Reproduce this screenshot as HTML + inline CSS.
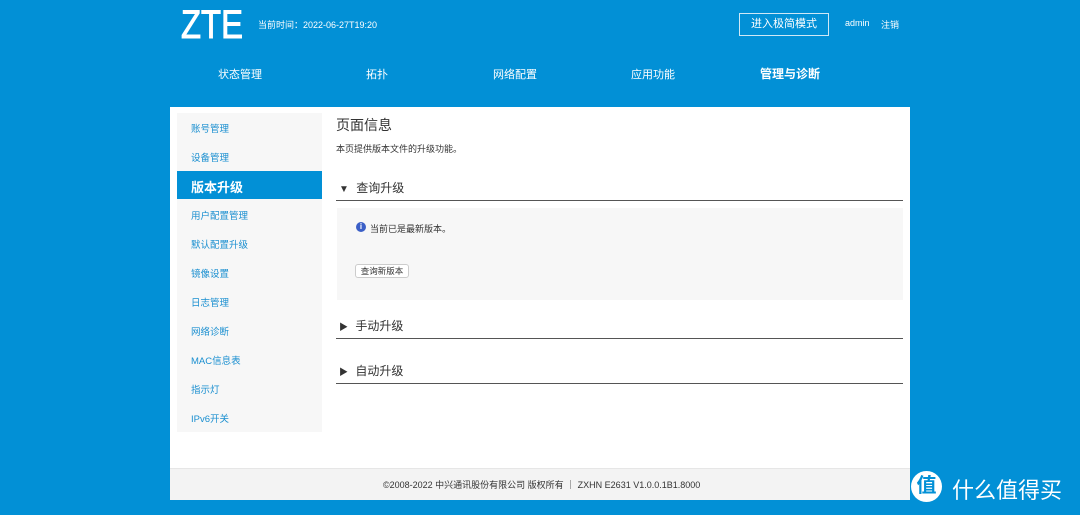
<!DOCTYPE html><html><head><meta charset="utf-8"><style>
body{margin:0;width:1080px;height:515px;background:#0290d6;font-family:"Liberation Sans","Noto Sans CJK SC",sans-serif;position:relative;overflow:hidden}
.a{position:absolute;white-space:nowrap}
.w{color:#fff}
.nav{font-size:11px;color:#fff;top:66px}
.side{position:absolute;left:177px;top:113px;width:145px;height:319px;background:#f7f7f7}
.si{position:absolute;left:14px;font-size:9.5px;color:#1a8fd0}
.sec{position:absolute;left:336px;width:567px;height:1px;background:#555}
.st{position:absolute;left:339px;font-size:12px;color:#333}
</style></head><body>
<div class="a w" style="left:181px;top:3px;font-size:40px;letter-spacing:0px;transform:scaleX(.82);transform-origin:left;-webkit-text-stroke:1px #fff">ZTE</div>
<div class="a w" style="left:258px;top:18px;font-size:9px">当前时间：2022-06-27T19:20</div>
<div class="a w" style="left:739px;top:13px;width:88px;height:21px;border:1px solid #cfe8f6;font-size:11px;text-align:center;line-height:21px">进入极简模式</div>
<div class="a w" style="left:845px;top:18px;font-size:9px">admin</div>
<div class="a w" style="left:881px;top:18px;font-size:9px">注销</div>
<div class="a nav" style="left:218px">状态管理</div>
<div class="a nav" style="left:366px">拓扑</div>
<div class="a nav" style="left:493px">网络配置</div>
<div class="a nav" style="left:631px">应用功能</div>
<div class="a nav" style="left:760px;font-size:12px;font-weight:bold;top:65px">管理与诊断</div>
<div class="a" style="left:170px;top:107px;width:740px;height:392px;background:#fff"></div>
<div class="a" style="left:170px;top:468px;width:740px;height:31px;background:#f3f3f3;border-top:1px solid #e6e6e6"></div>
<div class="a" style="left:383px;top:478px;font-size:9px;color:#333">©2008-2022 中兴通讯股份有限公司 版权所有 ｜ ZXHN E2631 V1.0.0.1B1.8000</div>
<div class="side">
<div class="si" style="top:8px">账号管理</div>
<div class="si" style="top:37px">设备管理</div>
<div style="position:absolute;left:0;top:58px;width:145px;height:28px;background:#0290d6"></div>
<div class="si" style="top:64px;color:#fff;font-size:13px;font-weight:bold">版本升级</div>
<div class="si" style="top:95px">用户配置管理</div>
<div class="si" style="top:124px">默认配置升级</div>
<div class="si" style="top:153px">镜像设置</div>
<div class="si" style="top:182px">日志管理</div>
<div class="si" style="top:211px">网络诊断</div>
<div class="si" style="top:240px">MAC信息表</div>
<div class="si" style="top:269px">指示灯</div>
<div class="si" style="top:298px">IPv6开关</div>
</div>
<div class="a" style="left:336px;top:115px;font-size:14px;color:#333">页面信息</div>
<div class="a" style="left:336px;top:142px;font-size:9px;color:#333">本页提供版本文件的升级功能。</div>
<div class="st" style="top:179px"><span style="font-size:10px;margin-right:4px">▼</span> 查询升级</div>
<div class="sec" style="top:200px"></div>
<div class="a" style="left:337px;top:208px;width:566px;height:92px;background:#f7f7f7"></div>
<div class="a" style="left:356px;top:222px;width:10px;height:10px;border-radius:50%;background:#3b5fc7;color:#fff;font-size:8px;font-weight:bold;text-align:center;line-height:10px">i</div>
<div class="a" style="left:370px;top:222px;font-size:9px;color:#333">当前已是最新版本。</div>
<div class="a" style="left:355px;top:264px;width:52px;height:12px;background:#fff;border:1px solid #ccc;border-radius:3px;font-size:8.5px;color:#333;text-align:center;line-height:12px">查询新版本</div>
<div class="st" style="top:317px"><span style="font-size:9px;margin-right:4px">▶</span> 手动升级</div>
<div class="sec" style="top:338px"></div>
<div class="st" style="top:362px"><span style="font-size:9px;margin-right:4px">▶</span> 自动升级</div>
<div class="sec" style="top:383px"></div>
<div class="a" style="left:911px;top:471px;width:31px;height:31px;border-radius:50%;background:#fff;color:#0290d6;font-size:20px;font-weight:bold;text-align:center;line-height:31px">值</div>
<div class="a w" style="left:952px;top:473px;font-size:22px">什么值得买</div>
</body></html>
